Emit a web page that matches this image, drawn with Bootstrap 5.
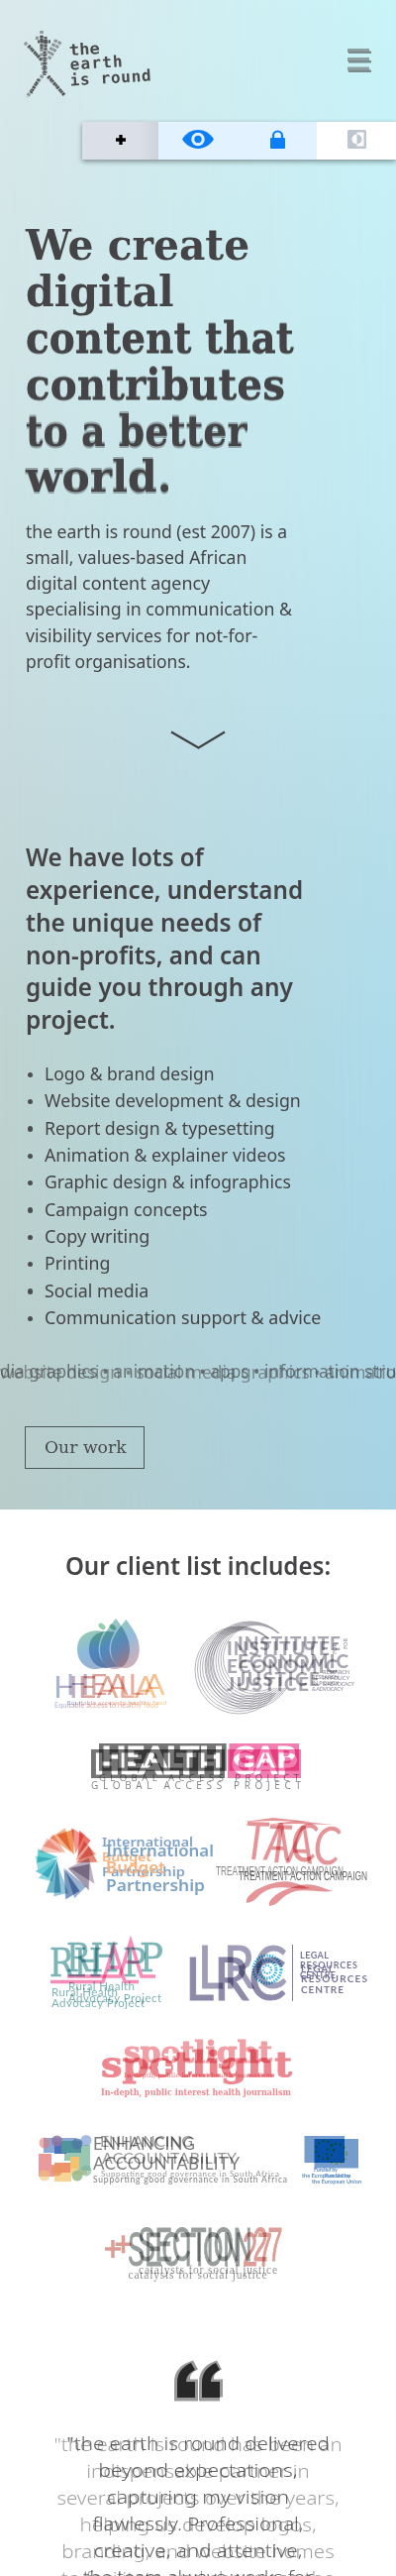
<!DOCTYPE html>
<html lang="en">
<head>
<meta charset="utf-8">
<meta name="viewport" content="width=device-width, initial-scale=1">
<title>the earth is round</title>
<link rel="stylesheet" href="https://cdn.jsdelivr.net/npm/bootstrap@5.3.0/dist/css/bootstrap.min.css">
<style>
body{font-family:"Noto Sans","Open Sans",sans-serif;color:#444345;background:#fff;height:2599px;overflow:hidden}
svg{display:block;flex:none;overflow:visible}
.hero-area{height:1523px;isolation:isolate;background:linear-gradient(180deg,#dbe9ec 0,#cde3e5 500px,#c6dadd 780px,#bed4d0 1060px,#b9cdca 1523px)}
.hero-area::before{content:"";position:absolute;inset:0;z-index:-1;background:linear-gradient(180deg,#c8f4f8 0,#c1eaf2 500px,#b6dfeb 800px,#addaea 1060px,#a6d2e4 1523px);-webkit-mask-image:linear-gradient(90deg,transparent,#000);mask-image:linear-gradient(90deg,transparent,#000)}
.site-head{height:123px;padding:30px 25px 0 25px}
.toolbar-strip{height:38px;margin-left:83px;background:#fff;box-shadow:0 2px 5px rgba(0,0,0,.4)}
.toolbar-strip .tool-plus{width:77px;background:linear-gradient(90deg,#dbdfe7 75%,#cfd2da)}
.toolbar-strip .tool-blue{width:80px;background:#e3f2ff}
.fit{display:block;width:max-content;transform-origin:0 0;white-space:nowrap}
.mid .fit{transform-origin:50% 0;margin-left:50%;translate:-50% 0}
h1{font:bold 43.5px/46.9px "DejaVu Serif",serif;margin:62.9px 0 0 25.5px;height:281.4px}
h1 .g1{text-shadow:0 .7px rgba(68,67,69,.5),0 -.7px rgba(68,67,69,.5)}
h1 .g2{text-shadow:0 1.6px rgba(68,67,69,.4),0 -1.6px rgba(68,67,69,.4)}
h1 .g3{text-shadow:0 2px rgba(68,67,69,.4),0 -2px rgba(68,67,69,.4)}
.intro{font-size:18px;line-height:26.2px;margin:17.6px 0 0 25.5px;height:157.2px}
.chev{margin:56px auto 0}
h2{font-weight:600;font-size:25.5px;line-height:32.85px;margin:92px 0 0 26px;height:197.1px}
.services{font-size:18px;line-height:27.33px;margin:25px 0 0 45px;height:273.3px;list-style:none;padding:0}
.services li{position:relative}
.services li::before{content:"";position:absolute;left:-17.500px;top:11.5px;width:5.500px;height:5.500px;border-radius:50%;background:#4c4f51}
.ticker{height:30px;line-height:30px;font-size:18.5px;margin-top:25px;display:grid;overflow:hidden}
.ticker>div{grid-area:1/1}
.work-btn{width:121px;height:43px;margin:41px 0 0 25px;border:1.5px solid #4c5557;font:17px/41px "DejaVu Serif",serif;padding:0 0 0 18.5px;border-radius:0;color:#4a4b4d;display:block;text-align:left}
.list-title{font-weight:600;font-size:26px;line-height:34px;padding-top:39px;height:107px;margin:0}
.clients svg>g,.clients svg>use{mix-blend-mode:multiply}
.ghost{opacity:.54}
.quotes{display:grid;font-size:19px;line-height:27px;font-weight:300;margin-top:29px}
.quotes>div{grid-area:1/1}
</style>
</head>
<body>
<section class="hero-area position-relative">
 <header class="site-head d-flex justify-content-between align-items-start">
  <svg width="128" height="72" viewBox="25 30 128 72" fill="none" stroke="#444" font-family="'DejaVu Sans Mono',monospace">
   <g stroke-dasharray="3 1.5" stroke-width="3.500" stroke-opacity=".5">
    <path d="M25 43 42 60 45 76M61 42 49 60M42 31V60M46 40V74M36 38 50 42M43 76 27 98M48 77 66 97M57 40 49 54"/></g>
   <g stroke-dasharray="2 .8" stroke-width="3" stroke-opacity=".85"><path d="M29 46 42 61M42 36V50M46 37V50M38 42H51M45 52V76M49 77 65 96M39 80 31 94"/></g>
   <g fill="#4a4a4a" stroke="none" font-weight="bold" font-size="16" transform="rotate(-3.5 70 70)">
    <text x="71" y="56" textLength="31" lengthAdjust="spacingAndGlyphs">the</text><text x="71" y="70.500" textLength="53">earth</text><text x="70" y="86.500" textLength="82">is round</text></g>
  </svg>
  <svg width="24" height="26" viewBox="351 48 24 26" style="margin-top:18px"><path fill="#8fa0a2" d="M351 49h22v4h-22zm0 9h22v4h-22zm0 9.500h22v4h-22z"/><path fill="#7b8c8e" d="M352 51.500h23v2.500h-23zm0 9.500h23v2.500h-23zm0 9.500h23v2.500h-23z"/></svg>
 </header>
 <div class="toolbar-strip d-flex position-relative">
  <div class="tool-plus d-flex align-items-center justify-content-center" style="padding-bottom:2px"><svg width="10" height="10" viewBox="0 0 10 10"><path d="M5 0v10M0 5h10" stroke="#000" stroke-width="3.300"/></svg></div>
  <div class="tool-blue d-flex align-items-center justify-content-center" style="padding-bottom:3px"><svg width="32" height="19" viewBox="0 0 32 19"><path fill="#0d7ef5" d="M0 9.500C8-3.100 24-3.100 32 9.500 24 22 8 22 0 9.500z"/><circle cx="16" cy="9.500" r="6.700" fill="#e3f2ff"/><circle cx="16" cy="9.500" r="3.700" fill="#0d7ef5"/></svg></div>
  <div class="tool-blue d-flex align-items-center justify-content-center" style="padding-bottom:3px"><svg width="15" height="19" viewBox="0 0 15 19"><rect y="8" width="15" height="11" rx="1" fill="#0d7ef5"/><path d="M3 9V6a4.500 4.500 0 0 1 9 0v3" fill="none" stroke="#0d7ef5" stroke-width="2.200"/></svg></div>
  <div class="flex-fill d-flex align-items-center justify-content-center" style="padding-bottom:3px"><svg width="19" height="19" viewBox="0 0 19 19"><rect width="19" height="19" rx="1.500" fill="#bec7d1"/><path fill="#fff" d="M9.500 2.500h7v14h-7v-2a5 5 0 0 1 0-10z"/><path fill="#bec7d1" d="M9.500 4.500a5 5 0 0 1 0 10z"/></svg></div>
 </div>
 <h1><span class="fit" data-w="226">We create</span><span class="fit" data-w="150">digital</span><span class="fit g1" data-w="271">content that</span><span class="fit g1" data-w="262">contributes</span><span class="fit g2" data-w="223">to a better</span><span class="fit g3" data-w="147">world.</span></h1>
 <p class="intro mb-0"><span class="fit" data-w="264">the earth is round (est 2007) is a</span><span class="fit" data-w="223">small, values-based African</span><span class="fit" data-w="186">digital content agency</span><span class="fit" data-w="269">specialising in communication &amp;</span><span class="fit" data-w="234">visibility services for not-for-</span><span class="fit" data-w="166">profit organisations.</span></p>
 <svg class="chev" width="56" height="20" viewBox="0 0 56 20"><path d="M1 2.500 28.500 18.500 55 2.500" fill="none" stroke="#3e4243" stroke-width="2.200"/></svg>
 <h2 class="mb-0"><span class="fit" data-w="180">We have lots of</span><span class="fit" data-w="280">experience, understand</span><span class="fit" data-w="238">the unique needs of</span><span class="fit" data-w="238">non-profits, and can</span><span class="fit" data-w="270">guide you through any</span><span class="fit" data-w="91">project.</span></h2>
 <ul class="services mb-0">
  <li><span class="fit" data-w="172">Logo &amp; brand design</span></li><li><span class="fit" data-w="259">Website development &amp; design</span></li><li><span class="fit" data-w="233">Report design &amp; typesetting</span></li><li><span class="fit" data-w="244">Animation &amp; explainer videos</span></li><li><span class="fit" data-w="249">Graphic design &amp; infographics</span></li><li><span class="fit" data-w="165">Campaign concepts</span></li><li><span class="fit" data-w="106">Copy writing</span></li><li><span class="fit" data-w="66">Printing</span></li><li><span class="fit" data-w="105">Social media</span></li><li><span class="fit" data-w="279">Communication support &amp; advice</span></li>
 </ul>
 <div class="ticker"><div style="opacity:.65"><span class="fit" data-w="400">dia graphics • animation • apps • information stru</span></div><div style="opacity:.5;padding-top:1px"><span class="fit" data-w="400">website design • social media graphics • animatio</span></div></div>
 <a class="btn work-btn" href="#"><span class="fit" data-w="83">Our work</span></a>
</section>

<section class="clients">
 <h2 class="list-title m-0"><span class="mid d-block"><span class="fit" data-w="268">Our client list includes:</span></span></h2>
 <div class="d-flex" style="height:125px;padding-left:50px">
  <svg width="135" height="110" viewBox="50 1630 135 110" font-family="Lato,sans-serif">
   <defs><linearGradient id="ap" x2=".4" y2="1"><stop stop-color="#3fa35c"/><stop offset=".55" stop-color="#2a7fc0"/><stop offset="1" stop-color="#3c70a8"/></linearGradient><linearGradient id="dp" x2=".5" y2="1"><stop stop-color="#43a36b"/><stop offset=".55" stop-color="#3583c0"/><stop offset="1" stop-color="#9b6b80"/></linearGradient>
   <linearGradient id="tx" gradientUnits="userSpaceOnUse" x1="55" x2="160"><stop stop-color="#5878bd"/><stop offset=".35" stop-color="#c2503f"/><stop offset=".7" stop-color="#d96545"/><stop offset="1" stop-color="#f7a52c"/></linearGradient></defs>
   <g id="heala" class="ghost"><path fill="url(#ap)" d="M105 1646c-15-3-27 3-27 18 0 12 8 20 18 20 4 0 6-2 14-1-14-11-12-24-5-37z"/><path fill="url(#dp)" d="M117 1633c7 9 14 19 14 31 0 13-7 20-15 20s-15-7-15-20c0-12 9-22 16-31z"/><ellipse cx="103" cy="1641" rx="4" ry="2.500" transform="rotate(40 103 1641)" fill="#43a36b"/>
   <g fill="url(#tx)"><text x="54" y="1712.500" font-size="30" textLength="104" lengthAdjust="spacingAndGlyphs">HEALA</text><text x="55" y="1722.500" font-size="6.800" textLength="105" lengthAdjust="spacingAndGlyphs">Equitable access to healthy food</text></g></g>
   <use href="#heala" transform="translate(15 66.400) scale(.96)"/>
  </svg>
  <svg width="175" height="110" viewBox="185 1630 175 110" font-family="Lato,sans-serif">
   <g id="iej" opacity=".55"><g fill="none" stroke="#55525f" stroke-width=".8"><circle cx="241" cy="1685" r="44"/><circle cx="242" cy="1684" r="42.500"/><circle cx="243" cy="1683" r="41"/><circle cx="244" cy="1682" r="39.500"/><circle cx="245" cy="1681" r="38"/><circle cx="246" cy="1680" r="36.500"/><circle cx="247" cy="1679" r="35"/><circle cx="248" cy="1678" r="33.500"/></g>
   <path d="M230 1653h104v17h17v18h11v20h-132z" fill="#fff"/>
   <g fill="#625f70" font-weight="900" font-size="19"><text x="229" y="1670" textLength="104">INSTITUTE</text><text x="229" y="1688" textLength="112">ECONOMIC</text><text x="229" y="1705.500" textLength="83">JUSTICE</text><g font-size="5.500"><text x="315" y="1694" textLength="27">RESEARCH</text><text x="315" y="1700" textLength="27">IN POLICY</text><text x="315" y="1706" textLength="32">&amp; ADVOCACY</text><text transform="translate(340 1669) rotate(-90)">FOR</text></g></g></g>
   <use href="#iej" x="11" y="-5"/>
  </svg>
 </div>
 <div style="height:77px;padding-left:90px">
  <svg width="216" height="56" viewBox="90 1755 216 56" font-family="'Open Sans',sans-serif">
   <g id="gap" class="ghost"><path d="M92 1765h135v29H92z" fill="#000"/><path d="M230 1765h74v29h-74z" fill="#e70d70"/><g fill="#fff" stroke="#fff" font-weight="900" font-size="29" font-family="Lato"><text x="95" y="1790" textLength="129" lengthAdjust="spacingAndGlyphs">HEALTH</text><text x="234" y="1790" textLength="66" lengthAdjust="spacingAndGlyphs">GAP</text></g><text x="92" y="1805" font-size="10" textLength="212" fill="#111">GLOBAL ACCESS PROJECT</text></g>
   <use href="#gap" transform="translate(12.300 70) scale(.953 .957)"/>
  </svg>
 </div>
 <div class="d-flex" style="height:123px;padding-left:30px">
  <svg width="188" height="95" viewBox="30 1832 188 95" font-family="'Noto Sans',sans-serif">
   <g id="wheel" opacity=".65" stroke="#fff" stroke-width=".8"><path fill="#e65d0a" d="M75 1872 57 1851 75 1845z"/><path fill="#e22a1c" d="M78 1874 80 1846 92 1857z"/><path fill="#d5452d" d="M76 1880 90 1862 99 1879z"/><path fill="#725f80" d="M68 1885 91 1880 90 1908z"/><path fill="#2d5f9c" d="M64 1884 81 1908 66 1917z"/><path fill="#1f8cae" d="M58 1874 62 1910 46 1910z"/><path fill="#12aabf" d="M59 1874 49 1895 35 1888z"/><path fill="#12b2bd" d="M60 1874 37 1880 38 1865z"/><path fill="#ef8f78" d="M67 1870 43 1863 54 1850z"/></g>
   <use href="#wheel" transform="rotate(-14 66 1880)" opacity=".75"/>
   <g font-weight="600" opacity=".6"><g fill="#2c65a2" font-size="13"><text x="103" y="1863" textLength="92" lengthAdjust="spacingAndGlyphs">International</text><text x="103" y="1878" fill="#f17d24" textLength="50" lengthAdjust="spacingAndGlyphs">Budget</text><text x="103" y="1893" textLength="84" lengthAdjust="spacingAndGlyphs">Partnership</text></g><g fill="#2463a0" font-size="16"><text x="107" y="1873" textLength="109" lengthAdjust="spacingAndGlyphs">International</text><text x="107" y="1890" fill="#f17d24" textLength="60" lengthAdjust="spacingAndGlyphs">Budget</text><text x="107" y="1907.500" textLength="100" lengthAdjust="spacingAndGlyphs">Partnership</text></g></g>
  </svg>
  <svg width="155" height="95" viewBox="218 1832 155 95">
   <g id="tac" opacity=".5"><text x="246" y="1876" font-family="Lato" font-style="italic" font-size="53" fill="#cc2931" textLength="74" lengthAdjust="spacingAndGlyphs" transform="rotate(2 250 1874)">TAC</text><path fill="#cc2931" d="M246 1838 276 1834 313 1838 275 1837zM249 1920c-2-8 13-17 31-21 17-3 25 5 34 6-17 2-32-4-44 2-11 5-11 12-21 13z"/></g>
   <use href="#tac" x="23" y="3"/>
   <g font-family="'Liberation Sans Narrow','Liberation Sans'" font-size="13" fill="#333"><text x="218" y="1892" textLength="129" lengthAdjust="spacingAndGlyphs" opacity=".6">TREATMENT ACTION CAMPAIGN</text><text x="241" y="1896.500" textLength="130" lengthAdjust="spacingAndGlyphs" opacity=".75">TREATMENT ACTION CAMPAIGN</text></g>
  </svg>
 </div>
 <div class="d-flex" style="height:100px;padding-left:50px">
  <svg width="130" height="80" viewBox="50 1955 130 80" font-family="Lato,sans-serif">
   <g id="rhap" class="ghost"><g fill="#0d7477" stroke="#0d7477" stroke-width=".6" font-family="'DejaVu Serif',serif" font-size="40"><text x="50" y="1994" textLength="53" lengthAdjust="spacingAndGlyphs">RH</text><text x="124" y="1994" textLength="24" lengthAdjust="spacingAndGlyphs">P</text></g><path d="M51 1999.500H104L115 1964 126 1999.500H140M109 1985h12" fill="none" stroke="#ee2b7d" stroke-width="3.500"/><g fill="#0d6f74" font-size="11.500"><text x="52" y="2013.500" textLength="67">Rural Health</text><text x="52" y="2025" textLength="94">Advocacy Project</text></g></g>
   <use href="#rhap" x="17" y="-5.500"/>
  </svg>
  <svg width="190" height="80" viewBox="180 1955 190 80" font-family="Lato,sans-serif" fill="#191552">
   <g opacity=".5"><text x="187" y="2018" font-size="60" stroke="#191552" font-weight="normal" textLength="102" lengthAdjust="spacingAndGlyphs">LRC</text></g>
   <g opacity=".42"><text x="200" y="2006" font-size="60" stroke="#191552" textLength="90" lengthAdjust="spacingAndGlyphs">LRC</text></g>
   <g fill="none" stroke="#35b5e5" stroke-dasharray="1.500 1.200"><circle cx="270" cy="1987" r="14" stroke-width="3"/><circle cx="270" cy="1987" r="9" stroke-width="3"/><circle cx="270" cy="1987" r="4" stroke-width="2"/></g>
   <path d="M295.500 1962v57" stroke="#191552" opacity=".55"/>
   <g font-weight="bold" opacity=".6"><g font-size="9"><text x="303" y="1976" textLength="29">LEGAL</text><text x="303" y="1986" textLength="58">RESOURCES</text><text x="303" y="1995.500" textLength="36">CENTRE</text></g><g font-size="10"><text x="304" y="1989.500" textLength="33">LEGAL</text><text x="304" y="1999.500" textLength="67">RESOURCES</text><text x="304" y="2011" textLength="43">CENTRE</text></g></g>
  </svg>
 </div>
 <div style="height:95px;padding-left:100px">
  <svg width="196" height="65" viewBox="100 2055 196 65" font-family="'DejaVu Serif',serif" font-weight="bold" fill="#db1827">
   <g opacity=".52"><text x="102" y="2095" font-size="36" textLength="193" lengthAdjust="spacingAndGlyphs" stroke="#db1827">spotlight</text><text x="102" y="2113.500" font-size="8.500" textLength="192" lengthAdjust="spacingAndGlyphs">In-depth, public interest health journalism</text></g>
   <g opacity=".42"><text x="125" y="2081" font-size="29" textLength="150" lengthAdjust="spacingAndGlyphs" stroke="#db1827">spotlight</text><text x="125" y="2095.500" font-size="6.500" textLength="150" lengthAdjust="spacingAndGlyphs">In-depth, public interest health journalism</text></g>
   <path d="M166 2079v14M159 2086h14M172 2067v12M166 2073h12" stroke="#fff" stroke-width="2.500"/>
  </svg>
 </div>
 <div class="d-flex" style="height:90px;padding-left:38px">
  <svg width="257" height="60" viewBox="38 2150 257 60" font-family="Lato,sans-serif">
   <g opacity=".75"><g opacity=".68"><path fill="#1a55b0" d="M44 2172v-15h33v10H60v5z"/><path fill="#d73838" d="M39 2173h13v11h20v12H39z"/><path fill="#f0aa2d" d="M55 2183h23v-12h10v23h-16v7H55z"/><path fill="#369269" d="M65 2164h26v26H79v-10H65z"/></g><path fill="#0b43a3" d="M55 2161h12v12H55z"/><path fill="#167079" d="M62 2160h20v12H62z"/><path fill="#e8703a" d="M55 2182h16v10H55z"/><path fill="#efb040" d="M71 2176h9v12h-9z"/>
   <g opacity=".6"><circle cx="45" cy="2162" r="5.500" fill="#d74b4b"/><circle cx="45" cy="2195" r="5.500" fill="#edb14b"/><circle cx="87" cy="2159.500" r="5.500" fill="#3a68c0"/><circle cx="87" cy="2190" r="5.500" fill="#4d9679"/></g><g opacity=".85"><circle cx="57.500" cy="2160" r="5.500" fill="#6a4580"/><circle cx="78" cy="2163" r="5.500" fill="#124f86"/><circle cx="57.500" cy="2190" r="5.500" fill="#e0722d"/><circle cx="78" cy="2195" r="5.500" fill="#6f9f62"/></g></g>
   <g fill="#333" opacity=".65"><text x="94" y="2169" font-size="17" textLength="103">ENHANCING</text><text x="94" y="2188.500" font-size="17" textLength="148">ACCOUNTABILITY</text><text x="94" y="2202" font-size="8.500" textLength="196">Supporting good governance in South Africa</text></g>
   <g fill="#333" opacity=".5"><text x="101" y="2165.500" font-size="16" textLength="94">ENHANCING</text><text x="103" y="2183" font-size="16" textLength="136">ACCOUNTABILITY</text><text x="102" y="2196" font-size="8" textLength="180">Supporting good governance in South Africa</text></g>
  </svg>
  <svg width="70" height="60" viewBox="295 2150 70 60" font-family="Lato,sans-serif">
   <g fill="#0750a5" opacity=".56"><path d="M307.500 2155H348v27h-40.500z"/><path d="M317.500 2158H362v29.500h-44.500z"/></g><path d="M317.500 2158H348v24h-30.500z" fill="#0750a5"/><g fill="none" stroke="#e8df2f" stroke-width="1.800" stroke-dasharray="1.600 3.400"><circle cx="328" cy="2169" r="9"/><circle cx="340" cy="2173" r="10"/></g>
   <g fill="#0750a5" opacity=".65" font-weight="bold" font-size="5.500"><text x="317" y="2190.500" textLength="24">Funded by</text><text x="305" y="2196.500" textLength="49">the European Union</text><text x="328" y="2196.500" textLength="26">Funded by</text><text x="315" y="2203" textLength="50">the European Union</text></g>
  </svg>
 </div>
 <div style="height:141px;padding-left:105px">
  <svg width="185" height="65" viewBox="105 2240 185 65" font-family="'Liberation Sans Narrow','Liberation Sans',sans-serif">
   <g id="s27" opacity=".48"><path d="M106 2269h16M114 2260v18" stroke="#b43323" stroke-width="3.500"/><text x="129" y="2286" font-size="48" textLength="115" lengthAdjust="spacingAndGlyphs" fill="#27332e" stroke="#27332e">SECTION</text><text x="245" y="2286" font-size="48" textLength="30" lengthAdjust="spacingAndGlyphs" fill="#b43323" stroke="#b43323">27</text><text x="129.500" y="2299" font-family="'Liberation Serif'" font-size="11.500" textLength="140" fill="#111">catalysts for social justice</text></g>
   <use href="#s27" x="10.500" y="-4.800"/>
  </svg>
 </div>
 <svg class="mx-auto" width="50" height="42" viewBox="173 2381 50 42"><g fill="#999"><path d="M174 2422.500v-19c0-11 6-18 19-22l5 9c-7 3-8 6-8 10h8v22z"/><path d="M199 2422.500v-19c0-11 6-18 18-22l5 9c-7 3-8 6-8 10h9v18h-3v4z"/></g><g fill="#414042"><path d="M177 2419v-15c0-10 5-16 14-20l4 7c-6 3-9 7-9 12h9v16z"/><path d="M202 2419v-15c0-10 5-16 14-20l4 7c-6 3-9 7-9 12h9v16z"/></g></svg>
 <div class="quotes mid">
  <div style="opacity:.5;padding-top:1px"><span class="fit" data-w="291">"the earth is round has been an</span><span class="fit" data-w="226">indispensable partner in</span><span class="fit" data-w="285">several projects over the years,</span><span class="fit" data-w="239">helping us develop logos,</span><span class="fit" data-w="276">branding, and website homes</span><span class="fit" data-w="276">to facilitate and showcase the</span></div>
  <div style="opacity:.85"><span class="fit" data-w="266">"the earth is round delivered</span><span class="fit" data-w="201">beyond expectations,</span><span class="fit" data-w="184">capturing my vision</span><span class="fit" data-w="213">flawlessly. Professional,</span><span class="fit" data-w="211">creative, and attentive,</span><span class="fit" data-w="232">the team always works for</span></div>
 </div>
</section>
<script src="https://cdn.jsdelivr.net/npm/bootstrap@5.3.0/dist/js/bootstrap.bundle.min.js"></script>
<script>
// Condense each text line to its set measure.
document.querySelectorAll('.fit').forEach(function(e){e.style.transform='scaleX('+(e.dataset.w/e.offsetWidth)+')';});
</script>
</body>
</html>
